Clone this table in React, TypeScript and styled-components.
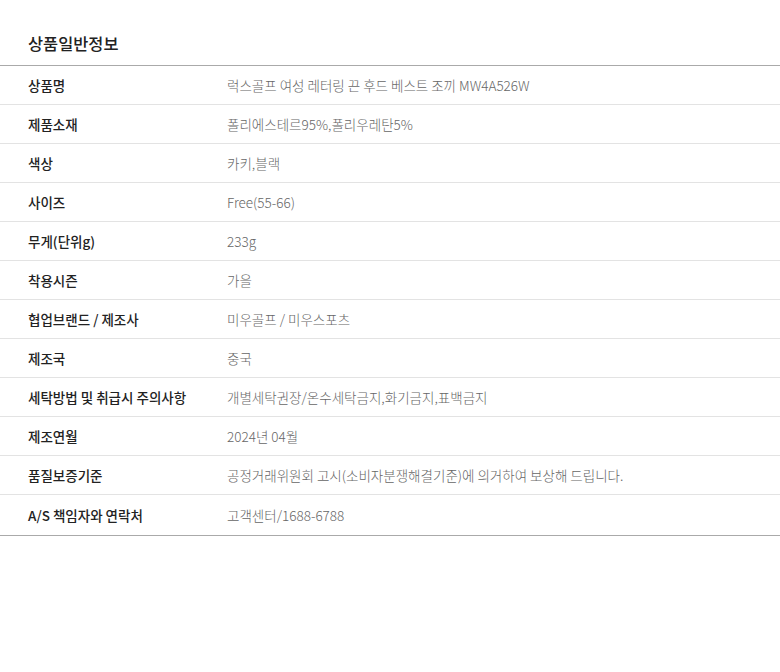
import React from 'react'
import styled, { createGlobalStyle } from 'styled-components'

const rows = [
  { label: '상품명', value: '럭스골프 여성 레터링 끈 후드 베스트 조끼 MW4A526W' },
  { label: '제품소재', value: '폴리에스테르95%,폴리우레탄5%' },
  { label: '색상', value: '카키,블랙' },
  { label: '사이즈', value: 'Free(55-66)' },
  { label: '무게(단위g)', value: '233g' },
  { label: '착용시즌', value: '가을' },
  { label: '협업브랜드 / 제조사', value: '미우골프 / 미우스포츠' },
  { label: '제조국', value: '중국' },
  { label: '세탁방법 및 취급시 주의사항', value: '개별세탁권장/온수세탁금지,화기금지,표백금지' },
  { label: '제조연월', value: '2024년 04월' },
  { label: '품질보증기준', value: '공정거래위원회 고시(소비자분쟁해결기준)에 의거하여 보상해 드립니다.' },
  { label: 'A/S 책임자와 연락처', value: '고객센터/1688-6788' },
]

const GlobalStyle = createGlobalStyle`
  body {
    margin: 0;
    background: #fff;
    font-family: "Noto Sans CJK KR", "Noto Sans", sans-serif;
  }
`

const App = () => {
  return (
    <Container>
      <GlobalStyle />
      <Title>상품일반정보</Title>
      <Table>
        {rows.map((el) => (
          <Row key={el.label}>
            <Label>{el.label}</Label>
            <Value>{el.value}</Value>
          </Row>
        ))}
      </Table>
    </Container>
  )
}

export default App

const Container = styled.div`
  width: 780px;
  padding-top: 30px;
`
const Title = styled.h2`
  margin: 0;
  padding: 0 28px;
  height: 35px;
  line-height: 26px;
  font-size: 16.4px;
  font-weight: 500;
  color: #222;
`
const Table = styled.div`
  border-top: 1px solid #aaa;
  border-bottom: 1px solid #aaa;
`
const Row = styled.div`
  display: grid;
  grid-template-columns: 199px 1fr;
  align-items: center;
  height: 38px;
  padding-left: 28px;
  border-bottom: 1px solid #e3e3e3;
  &:last-child {
    border-bottom: none;
    height: 40px;
  }
`
const Label = styled.div`
  font-size: 13.5px;
  font-weight: 500;
  color: #222;
`
const Value = styled.div`
  font-size: 13.5px;
  font-weight: 300;
  color: #666;
`
